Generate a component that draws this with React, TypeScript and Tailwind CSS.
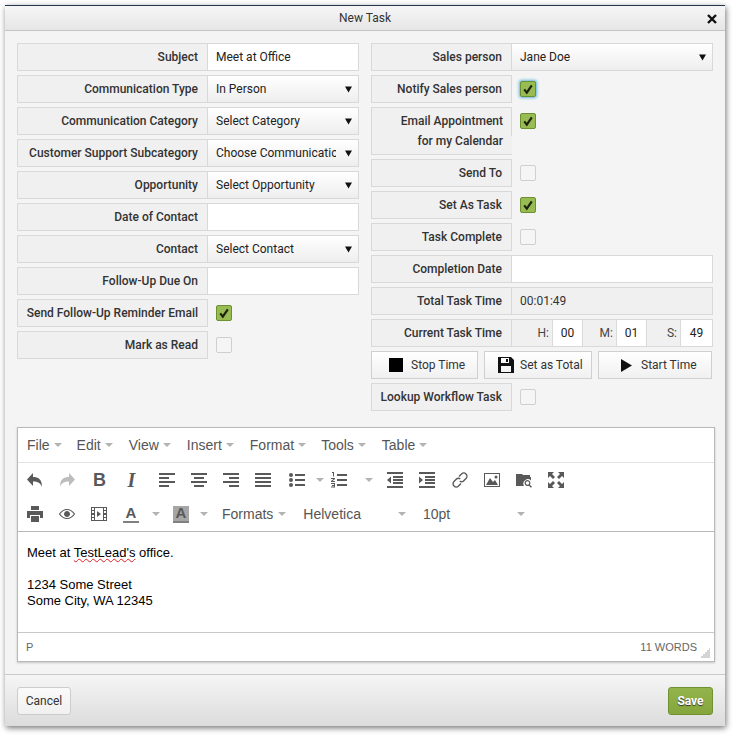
import type { ReactNode } from 'react';

const label = 'flex items-center justify-end bg-[#f0f0f0] border border-[#d9d9d9] pr-[9px] text-[12px] font-medium text-[#333] whitespace-nowrap';

function Caret({ className = 'ml-[4px]' }: { className?: string }) {
  return (
    <svg width="8" height="4" viewBox="0 0 8 4" className={`shrink-0 ${className}`}>
      <path d="M0 0h8L4 4z" fill="#b3b3b3" />
    </svg>
  );
}

function Row({ title, width, children }: { title: string; width: string; children: ReactNode }) {
  return (
    <div className="flex h-[28px]">
      <div className={`${label} ${width}`}>{title}</div>
      {children}
    </div>
  );
}

function TextField({ value = '' }: { value?: string }) {
  return (
    <div className="flex-1 flex items-center pl-[8px] bg-white border border-l-0 border-[#d9d9d9] text-[12px] text-[#222]">
      {value}
    </div>
  );
}

function SelectField({ value }: { value: string }) {
  return (
    <div className="flex-1 flex items-center justify-between pl-[8px] pr-[6px] bg-gradient-to-b from-white to-[#eeeeee] border border-l-0 border-[#d9d9d9] text-[12px] text-[#222]">
      <span className="block w-[120px] overflow-hidden whitespace-nowrap">{value}</span>
      <svg width="7" height="7" viewBox="0 0 7 7">
        <path d="M0 .5h7L3.5 6.5z" fill="#111" />
      </svg>
    </div>
  );
}

function Check({ on, focus }: { on?: boolean; focus?: boolean }) {
  return (
    <div className="pl-[8px] pt-[6px]">
      <div
        className={
          on
            ? `w-[16px] h-[16px] rounded-[2px] flex items-center justify-center bg-[#98bb52] border border-[#6c8f31] ${focus ? 'shadow-[0_0_3px_1px_#5fb6d9]' : ''}`
            : 'w-[16px] h-[16px] rounded-[2px] bg-[#f5f5f5] border border-[#cfcfcf]'
        }
      >
        {on && (
          <svg width="12" height="12" viewBox="0 0 12 12">
            <path d="M2.2 6.4 4.800 9.600 9.800 2.400" fill="none" stroke="#1c2410" strokeWidth="2.200" />
          </svg>
        )}
      </div>
    </div>
  );
}

function TimeCell({ name, value, width, box }: { name: string; value: string; width: string; box: string }) {
  return (
    <div className={`flex items-stretch justify-end ${width}`}>
      <span className="self-center pr-[3px] text-[12px] text-[#444]">{name}</span>
      <span className={`flex items-center justify-center bg-white border-x border-[#d9d9d9] text-[12px] text-[#222] ${box}`}>
        {value}
      </span>
    </div>
  );
}

function TimerButton({ width, icon, text, gap }: { width: string; icon: ReactNode; text: string; gap: string }) {
  return (
    <button className={`h-[28px] flex items-center bg-gradient-to-b from-white to-[#f0f0f0] border border-[#d0d0d0] text-[12px] text-[#333] ${width} ${gap}`}>
      {icon}
      {text}
    </button>
  );
}

function Tool({ children, className = '' }: { children: ReactNode; className?: string }) {
  return <div className={`w-[32px] h-[34px] shrink-0 flex items-center justify-center ${className}`}>{children}</div>;
}

function Ico({ d, size = 16 }: { d: string; size?: number }) {
  return (
    <svg width={size} height={size} viewBox="0 0 16 16">
      <path d={d} fill="#595959" fillRule="evenodd" />
    </svg>
  );
}

const alignLeft = 'M0 1h16v2H0zM0 5h10v2H0zM0 9h16v2H0zM0 13h10v2H0z';
const alignCenter = 'M0 1h16v2H0zM3 5h10v2H3zM0 9h16v2H0zM3 13h10v2H3z';
const alignRight = 'M0 1h16v2H0zM6 5h10v2H6zM0 9h16v2H0zM6 13h10v2H6z';
const alignFull = 'M0 1h16v2H0zM0 5h16v2H0zM0 9h16v2H0zM0 13h16v2H0z';
const bullets = 'M6 2h10v2H6zM6 7h10v2H6zM6 12h10v2H6zM2 1a2 2 0 1 1 0 4 2 2 0 0 1 0-4zM2 6a2 2 0 1 1 0 4 2 2 0 0 1 0-4zM2 11a2 2 0 1 1 0 4 2 2 0 0 1 0-4z';
const numbers = 'M6 2h10v2H6zM6 7h10v2H6zM6 12h10v2H6zM1 0h2v4.500H2V1H1zM0 6h4v1L1.500 9H4v1H0V9l2.500-2H0zM0 11h4v4.500H0v-1h3V14H1v-1h2v-1H0z';
const outdent = 'M0 0h16v2H0zM6 4h10v2H6zM6 7h10v2H6zM6 10h10v2H6zM0 14h16v2H0zM4 4.500v7L0 8z';
const indent = 'M0 0h16v2H0zM6 4h10v2H6zM6 7h10v2H6zM6 10h10v2H6zM0 14h16v2H0zM0 4.500v7L4 8z';
const undo = 'M6 1v4c5 0 9 2 9 10-1.500-4-4-5.500-9-5.500V14L0 7.500z';
const redo = 'M10 1v4C5 5 1 7 1 15c1.500-4 4-5.500 9-5.500V14l6-6.500z';
const image = 'M0 1h16v14H0zM1 2v12h14V2zM2 13l4-7 3 4 2-2 3 5zM12 3.500a1.500 1.500 0 1 1 0 3 1.500 1.500 0 0 1 0-3z';
const browse = 'M0 2h6l1 1h7v2H0zM0 5h15v3.500A4.500 4.500 0 0 0 8 14H0zM11.500 8a3 3 0 0 1 2.400 4.700l2.100 2.100-1 1-2.100-2.100A3 3 0 1 1 11.500 8zm0 1.300a1.700 1.700 0 1 0 0 3.400 1.700 1.700 0 0 0 0-3.400z';
const fullscreen = 'M0 0h6L4 2l3 3-2 2-3-3-2 2zM16 0v6l-2-2-3 3-2-2 3-3-2-2zM0 16v-6l2 2 3-3 2 2-3 3 2 2zM16 16h-6l2-2-3-3 2-2 3 3 2-2z';
const print = 'M4 0h8v4H4zM0 5h16v7h-3V9H3v3H0zM4 10h8v6H4z';
const media = 'M0 1h16v14H0zM1 2v2h2V2zM1 5v2h2V5zM1 9v2h2V9zM1 12v2h2v-2zM13 2v2h2V2zM13 5v2h2V5zM13 9v2h2V9zM13 12v2h2v-2zM4 2v12h8V2zM6 5l4 3-4 3z';
const save = 'M0 0h13l3 3v13H0zM3 1v5h8V1zM8 2h2v3H8zM3 9v6h10V9z';

export default function App() {
  return (
    <div className="w-[733px] h-[735px] bg-white pl-[5px] pt-[5px] font-['Roboto',sans-serif]">
      <div className="w-[720px] h-[721px] flex flex-col bg-[#f4f4f4] border-t border-[#24364d] shadow-[1px_2px_6px_rgba(0,0,0,0.55)]">
        {/* Title bar */}
        <div className="relative h-[25px] flex items-center justify-center bg-gradient-to-b from-[#f6f6f6] to-[#e6e6e6] border-b border-[#c4c4c4] text-[12px] text-[#333]">
          New Task
          <svg width="10" height="10" viewBox="0 0 10 10" className="absolute right-[8px] top-[8px]">
            <path d="M1 1l8 8M9 1l-8 8" stroke="#111" strokeWidth="2.400" />
          </svg>
        </div>

        {/* Form columns */}
        <div className="flex gap-[12px] pl-[12px] pt-[12px]">
          <div className="w-[342px] flex flex-col gap-[4px]">
            <Row title="Subject" width="w-[191px]"><TextField value="Meet at Office" /></Row>
            <Row title="Communication Type" width="w-[191px]"><SelectField value="In Person" /></Row>
            <Row title="Communication Category" width="w-[191px]"><SelectField value="Select Category" /></Row>
            <Row title="Customer Support Subcategory" width="w-[191px]"><SelectField value="Choose Communication" /></Row>
            <Row title="Opportunity" width="w-[191px]"><SelectField value="Select Opportunity" /></Row>
            <Row title="Date of Contact" width="w-[191px]"><TextField /></Row>
            <Row title="Contact" width="w-[191px]"><SelectField value="Select Contact" /></Row>
            <Row title="Follow-Up Due On" width="w-[191px]"><TextField /></Row>
            <Row title="Send Follow-Up Reminder Email" width="w-[191px]"><Check on /></Row>
            <Row title="Mark as Read" width="w-[191px]"><Check /></Row>
          </div>

          <div className="w-[342px] flex flex-col gap-[4px]">
            <Row title="Sales person" width="w-[141px]"><SelectField value="Jane Doe" /></Row>
            <Row title="Notify Sales person" width="w-[141px]"><Check on focus /></Row>
            <div className="flex h-[48px]">
              <div className="w-[141px] flex bg-[#f0f0f0] border-y border-l border-[#d9d9d9]">
                <div className="flex-1 pr-[8px] pt-[3px] text-right text-[12px] leading-[20px] font-medium text-[#333]">
                  Email Appointment
                  <br />
                  for my Calendar
                </div>
                <div className="w-px h-[28px] bg-[#d9d9d9]" />
              </div>
              <Check on />
            </div>
            <Row title="Send To" width="w-[141px]"><Check /></Row>
            <Row title="Set As Task" width="w-[141px]"><Check on /></Row>
            <Row title="Task Complete" width="w-[141px]"><Check /></Row>
            <Row title="Completion Date" width="w-[141px]"><TextField /></Row>
            <Row title="Total Task Time" width="w-[141px]">
              <div className="flex-1 flex items-center pl-[8px] bg-[#f0f0f0] border border-l-0 border-[#d9d9d9] text-[12px] text-[#333]">
                00:01:49
              </div>
            </Row>
            <Row title="Current Task Time" width="w-[141px]">
              <div className="flex-1 flex bg-[#f0f0f0] border border-l-0 border-[#d9d9d9]">
                <TimeCell name="H:" value="00" width="w-[71px]" box="w-[31px]" />
                <TimeCell name="M:" value="01" width="w-[64px]" box="w-[31px]" />
                <TimeCell name="S:" value="49" width="w-[65px]" box="w-[32px] border-r-0" />
              </div>
            </Row>
            <div className="flex gap-[6px]">
              <TimerButton
                width="w-[107px] pl-[17px]"
                gap="gap-[8px]"
                text="Stop Time"
                icon={<span className="block w-[14px] h-[14px] bg-black" />}
              />
              <TimerButton
                width="w-[108px] pl-[13px]"
                gap="gap-[6px]"
                text="Set as Total"
                icon={
                  <svg width="16" height="16" viewBox="0 0 16 16">
                    <path d={save} fill="#111" fillRule="evenodd" />
                  </svg>
                }
              />
              <TimerButton
                width="w-[114px] pl-[22px]"
                gap="gap-[9px]"
                text="Start Time"
                icon={
                  <svg width="11" height="13" viewBox="0 0 11 13">
                    <path d="M0 0l11 6.500L0 13z" fill="#111" />
                  </svg>
                }
              />
            </div>
            <Row title="Lookup Workflow Task" width="w-[141px]"><Check /></Row>
          </div>
        </div>

        {/* Editor */}
        <div className="ml-[12px] mt-[16px] w-[698px] h-[235px] flex flex-col bg-white border border-[#b9b9b9] shadow-[0_1px_2px_rgba(0,0,0,0.2)] font-['Liberation_Sans',sans-serif]">
          <div className="h-[35px] shrink-0 flex items-center pl-[9px] border-b border-[#e2e2e2] text-[14px] text-[#555]">
            <span>File</span><Caret />
            <span className="ml-[15px]">Edit</span><Caret />
            <span className="ml-[16px]">View</span><Caret />
            <span className="ml-[16px]">Insert</span><Caret />
            <span className="ml-[16px]">Format</span><Caret />
            <span className="ml-[15px]">Tools</span><Caret />
            <span className="ml-[16px]">Table</span><Caret />
          </div>

          <div className="h-[69px] shrink-0 border-b border-[#b9b9b9]">
            <div className="flex items-center h-[34px] pl-[1px]">
              <Tool><Ico d={undo} /></Tool>
              <Tool className="opacity-40"><Ico d={redo} /></Tool>
              <Tool className="pl-[1px]"><span className="text-[18px] font-bold text-[#595959]">B</span></Tool>
              <Tool className="pl-[1px]"><span className="font-['Liberation_Serif',serif] text-[20px] font-bold italic text-[#595959]">I</span></Tool>
              <Tool className="ml-[4px]"><Ico d={alignLeft} /></Tool>
              <Tool><Ico d={alignCenter} /></Tool>
              <Tool><Ico d={alignRight} /></Tool>
              <Tool><Ico d={alignFull} /></Tool>
              <Tool className="ml-[2px]"><Ico d={bullets} /></Tool>
              <Caret className="ml-[3px]" />
              <Tool className="ml-[-1px]"><Ico d={numbers} /></Tool>
              <Caret className="ml-[10px]" />
              <Tool className="ml-[6px]"><Ico d={outdent} /></Tool>
              <Tool><Ico d={indent} /></Tool>
              <Tool className="ml-[1px]">
                <svg width="16" height="16" viewBox="0 0 16 16" fill="none" stroke="#595959" strokeWidth="1.400">
                  <path d="M7 4.500 9.500 2a2.600 2.600 0 0 1 4.500 4.500L11.500 9a2.600 2.600 0 0 1-3.700 0" />
                  <path d="M9 11.500 6.500 14A2.600 2.600 0 0 1 2 9.500L4.500 7a2.600 2.600 0 0 1 3.700 0" />
                </svg>
              </Tool>
              <Tool><Ico d={image} /></Tool>
              <Tool><Ico d={browse} /></Tool>
              <Tool><Ico d={fullscreen} /></Tool>
            </div>
            <div className="flex items-center h-[34px] pl-[1px] text-[14px] text-[#555]">
              <Tool><Ico d={print} /></Tool>
              <Tool>
                <svg width="16" height="16" viewBox="0 0 16 16" fill="none" stroke="#595959">
                  <path d="M.5 8C3 4.500 5.500 3.500 8 3.500s5 1 7.500 4.500c-2.500 3.500-5 4.500-7.500 4.500S3 11.500.5 8z" strokeWidth="1.200" />
                  <circle cx="8" cy="8" r="2.500" fill="#595959" />
                </svg>
              </Tool>
              <Tool><Ico d={media} /></Tool>
              <Tool>
                <div className="flex flex-col items-center">
                  <span className="text-[15px] leading-[14px] font-bold text-[#595959]">A</span>
                  <span className="block w-[16px] h-[2px] mt-[1px] bg-[#808080]" />
                </div>
              </Tool>
              <Caret className="ml-[5px]" />
              <Tool className="ml-[5px]">
                <div className="flex flex-col items-center">
                  <span className="w-[16px] h-[15px] flex items-center justify-center bg-[#a6a6a6] text-[15px] font-bold text-[#595959]">A</span>
                  <span className="block w-[16px] h-[2px] bg-[#808080]" />
                </div>
              </Tool>
              <Caret className="ml-[3px]" />
              <span className="ml-[14px]">Formats</span>
              <Caret className="ml-[5px]" />
              <span className="ml-[17px]">Helvetica</span>
              <Caret className="ml-[37px]" />
              <span className="ml-[17px]">10pt</span>
              <Caret className="ml-[67px]" />
            </div>
          </div>

          <div className="flex-1 px-[9px] pt-[13px] text-[13px] leading-[16px] text-black">
            <p>
              Meet at <span className="underline decoration-wavy decoration-[#e02020] decoration-1">TestLead's</span> office.
            </p>
            <p className="mt-[16px]">
              1234 Some Street
              <br />
              Some City, WA 12345
            </p>
          </div>

          <div className="relative h-[29px] shrink-0 flex items-center justify-between pl-[8px] pr-[17px] border-t border-[#c9c9c9] text-[11px] text-[#666]">
            <span>P</span>
            <span>11 WORDS</span>
            <svg width="10" height="10" viewBox="0 0 10 10" className="absolute right-[3px] bottom-[3px]">
              <path d="M8 1h1M6 3h3M4 5h5M2 7h7M0 9h9" stroke="#a9a9a9" />
            </svg>
          </div>
        </div>

        {/* Footer */}
        <div className="mt-[12px] flex-1 flex items-center justify-between px-[12px] bg-gradient-to-b from-[#f5f5f5] to-[#dcdcdc] border-t border-[#c9c9c9]">
          <button className="w-[54px] h-[28px] rounded-[3px] bg-gradient-to-b from-[#fafafa] to-[#f0f0f0] border border-[#cccccc] text-[12px] text-[#333]">
            Cancel
          </button>
          <button className="w-[45px] h-[28px] rounded-[3px] bg-gradient-to-b from-[#93b44c] to-[#86a63c] border border-[#6f9131] text-[12px] font-bold text-white [text-shadow:0_1px_1px_#333]">
            Save
          </button>
        </div>
      </div>
    </div>
  );
}
